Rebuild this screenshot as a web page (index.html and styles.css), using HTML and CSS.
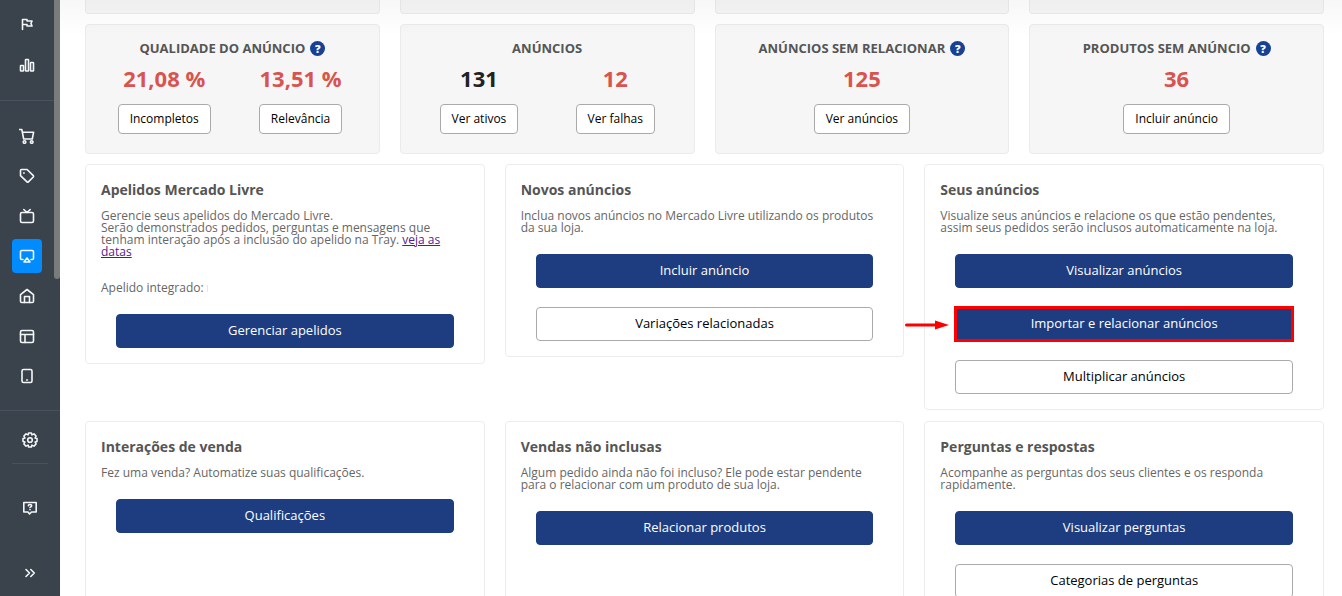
FILE: index.html
```
<!DOCTYPE html>
<html lang="pt-br">
	<head>
		<meta charset="utf-8">
		<meta name="viewport" content="width=device-width, initial-scale=1">
		<title>Mercado Livre</title>
		<link rel="stylesheet" href="styles.css">
	</head>

	<body>

		<aside class="sidebar">
			<nav class="menu">
				<div class="menu-group menu-top">
					<a class="menu-item" href="#" aria-label="Início"><svg viewBox="0 0 16 16"><path d="M3.500 13.500V3.500h4.500v1.500H13L12 7.500l1 2.500H8V8.500H3.500"/></svg></a>
					<a class="menu-item" href="#" aria-label="Relatórios"><svg viewBox="0 0 16 16"><rect x="1.500" y="8.500" width="3" height="5.500" rx=".5"/><rect x="6.500" y="2.500" width="3" height="11.500" rx=".5"/><rect x="11.500" y="5.500" width="3" height="8.500" rx=".5"/></svg></a>
				</div>
				<div class="menu-group menu-main">
					<a class="menu-item" href="#" aria-label="Pedidos"><svg viewBox="0 0 16 16"><path d="M.5 1.500h2.300l1.900 9.500h8.600l1.300-6.800H3.400"/><circle cx="5.500" cy="14" r="1.300"/><circle cx="12.700" cy="14" r="1.300"/></svg></a>
					<a class="menu-item" href="#" aria-label="Produtos"><svg viewBox="0 0 16 16"><path d="M1.500 2.500q0-1 1-1h5.600l6.200 6.100q.6.7 0 1.400l-4.900 4.900q-.7.6-1.400 0L1.500 7.700z"/><path d="M4.600 5h.6"/></svg></a>
					<a class="menu-item" href="#" aria-label="Marketing"><svg viewBox="0 0 16 16"><rect x="1.500" y="4.500" width="13" height="10" rx="1.500"/><path d="M4.800 1.500l3.200 3 3.200-3"/></svg></a>
					<a class="menu-item active" href="#" aria-label="Canais de venda"><svg viewBox="0 0 16 16"><path d="M4 11.500H2.800q-1.300 0-1.300-1.300V3.800q0-1.300 1.300-1.300h10.400q1.300 0 1.300 1.300v6.400q0 1.300-1.300 1.300H12"/><path d="M8 10l3 4H5z"/></svg></a>
					<a class="menu-item" href="#" aria-label="Minha loja"><svg viewBox="0 0 16 16"><path d="M1.500 6.600L8 1.500l6.500 5.100v6.600q0 1.300-1.300 1.300H2.800q-1.300 0-1.300-1.300z"/><path d="M5.500 14.500V8.500h5v6"/></svg></a>
					<a class="menu-item" href="#" aria-label="Layout"><svg viewBox="0 0 16 16"><rect x="1.500" y="2.500" width="13" height="12" rx="1.500"/><path d="M1.500 6.500h13M6 6.500v8"/></svg></a>
					<a class="menu-item" href="#" aria-label="Aplicativos"><svg viewBox="0 0 16 16"><rect x="3" y="1.500" width="10" height="13" rx="1.500"/><path d="M7.600 12h.8"/></svg></a>
				</div>
				<span class="menu-scroll"></span>
			</nav>
			<div class="menu-footer">
				<a class="menu-item" href="#" aria-label="Configurações"><svg viewBox="0 0 16 16"><path d="M6.600 1h2.800l.5 1.900 2.100-1 2.100 2.100-1 2.100 1.900.5v2.800l-1.900.5 1 2.100-2.100 2.100-2.100-1-.5 1.900H6.600l-.5-1.900-2.100 1-2.100-2.100 1-2.100L1 9.400V6.600l1.900-.5-1-2.100L4 1.900l2.100 1z"/><circle cx="8" cy="8" r="2.300"/></svg></a>
				<span class="menu-line"></span>
				<a class="menu-item menu-help" href="#" aria-label="Ajuda"><svg viewBox="0 0 16 16"><path d="M1.800 2.500h12.400v9.500H9.500L7.500 14 6 12H1.800z"/><path d="M6.300 5.800q0-1.300 1.700-1.300t1.700 1.300q0 .8-1.700 1.600M8 9.500v.3"/></svg></a>
				<a class="menu-item menu-expand" href="#" aria-label="Expandir menu"><svg viewBox="0 0 16 16"><path d="M4 4.500L7.500 8 4 11.500M8.800 4.500L12.300 8l-3.500 3.500"/></svg></a>
			</div>
		</aside>

		<main class="content">
			<div class="summary">
				<div class="summary-box summary-end"></div>
				<div class="summary-box summary-end"></div>
				<div class="summary-box summary-end"></div>
				<div class="summary-box summary-end"></div>

				<div class="summary-box">
					<h2 class="summary-title">QUALIDADE DO ANÚNCIO <span class="help">?</span></h2>
					<div class="summary-values">
						<div class="summary-value"><strong class="number red">21,08 %</strong><button class="btn-small">Incompletos</button></div>
						<div class="summary-value"><strong class="number red">13,51 %</strong><button class="btn-small">Relevância</button></div>
					</div>
				</div>
				<div class="summary-box">
					<h2 class="summary-title">ANÚNCIOS</h2>
					<div class="summary-values">
						<div class="summary-value"><strong class="number">131</strong><button class="btn-small">Ver ativos</button></div>
						<div class="summary-value"><strong class="number red">12</strong><button class="btn-small">Ver falhas</button></div>
					</div>
				</div>
				<div class="summary-box">
					<h2 class="summary-title">ANÚNCIOS SEM RELACIONAR <span class="help">?</span></h2>
					<div class="summary-values">
						<div class="summary-value"><strong class="number red">125</strong><button class="btn-small">Ver anúncios</button></div>
					</div>
				</div>
				<div class="summary-box">
					<h2 class="summary-title">PRODUTOS SEM ANÚNCIO <span class="help">?</span></h2>
					<div class="summary-values">
						<div class="summary-value"><strong class="number red">36</strong><button class="btn-small">Incluir anúncio</button></div>
					</div>
				</div>
			</div>

			<div class="panels">
				<section class="panel">
					<h3 class="panel-title">Apelidos Mercado Livre</h3>
					<p class="panel-text">Gerencie seus apelidos do Mercado Livre.<br>Serão demonstrados pedidos, perguntas e mensagens que tenham interação após a inclusão do apelido na Tray. <a class="panel-link" href="#">veja as datas</a></p>
					<p class="panel-text nickname">Apelido integrado: <span class="nickname-mark"></span></p>
					<div class="panel-buttons">
						<button class="btn btn-blue">Gerenciar apelidos</button>
					</div>
				</section>

				<section class="panel">
					<h3 class="panel-title">Novos anúncios</h3>
					<p class="panel-text">Inclua novos anúncios no Mercado Livre utilizando os produtos da sua loja.</p>
					<div class="panel-buttons">
						<button class="btn btn-blue">Incluir anúncio</button>
						<button class="btn">Variações relacionadas</button>
					</div>
				</section>

				<section class="panel">
					<h3 class="panel-title">Seus anúncios</h3>
					<p class="panel-text">Visualize seus anúncios e relacione os que estão pendentes, assim seus pedidos serão inclusos automaticamente na loja.</p>
					<div class="panel-buttons">
						<button class="btn btn-blue">Visualizar anúncios</button>
						<button class="btn btn-blue btn-marked">Importar e relacionar anúncios
							<svg class="arrow" viewBox="0 0 44 10"><path d="M1.500 5H32" stroke="#f00" stroke-width="3" stroke-linecap="round"/><path d="M30 .5L44 5 30 9.500z" fill="#f00"/></svg>
						</button>
						<button class="btn">Multiplicar anúncios</button>
					</div>
				</section>
			</div>

			<div class="panels panels-full">
				<section class="panel">
					<h3 class="panel-title">Interações de venda</h3>
					<p class="panel-text">Fez uma venda? Automatize suas qualificações.</p>
					<div class="panel-buttons">
						<button class="btn btn-blue">Qualificações</button>
					</div>
				</section>

				<section class="panel">
					<h3 class="panel-title">Vendas não inclusas</h3>
					<p class="panel-text">Algum pedido ainda não foi incluso? Ele pode estar pendente para o relacionar com um produto de sua loja.</p>
					<div class="panel-buttons">
						<button class="btn btn-blue">Relacionar produtos</button>
					</div>
				</section>

				<section class="panel">
					<h3 class="panel-title">Perguntas e respostas</h3>
					<p class="panel-text">Acompanhe as perguntas dos seus clientes e os responda rapidamente.</p>
					<div class="panel-buttons">
						<button class="btn btn-blue">Visualizar perguntas</button>
						<button class="btn">Categorias de perguntas</button>
					</div>
				</section>
			</div>
		</main>

	</body>
</html>
```
FILE: styles.css
```
* {
	box-sizing: border-box;
}
body {
	margin: 0;
	height: 100vh;
	overflow: hidden;
	display: flex;
	background: #fff;
	color: #555;
	font-family: "Open Sans", sans-serif;
	font-size: 12px;
}

/* menu lateral */
.sidebar {
	width: 60px;
	flex: none;
	display: flex;
	flex-direction: column;
	background: #3a424b;
}
.menu {
	position: relative;
	border-bottom: 1px solid #46525d;
}
.menu-group {
	width: 54px;
	display: flex;
	flex-direction: column;
	align-items: center;
}
.menu-top {
	gap: 7px;
	padding: 7px 0 18px;
	border-bottom: 1px solid #46525d;
}
.menu-main {
	gap: 6px;
	padding: 18px 0 17px;
}
.menu-item {
	width: 30px;
	height: 34px;
	flex: none;
	display: flex;
	align-items: center;
	justify-content: center;
	border-radius: 4px;
	color: #f4f7f9;
}
.menu-item svg {
	width: 16px;
	height: 16px;
	fill: none;
	stroke: currentColor;
	stroke-width: 1.6;
	stroke-linecap: round;
	stroke-linejoin: round;
}
.menu-item.active {
	background: #008cff;
}
.menu-scroll {
	position: absolute;
	top: 0;
	right: 0;
	width: 6px;
	height: 279px;
	border-radius: 0 0 3px 3px;
	background: #7a7b7d;
}
.menu-footer {
	flex: 1;
	display: flex;
	flex-direction: column;
	align-items: center;
	padding: 12px 0 6px;
}
.menu-line {
	width: 36px;
	margin-top: 6px;
	border-top: 1px solid #46525d;
}
.menu-help {
	margin-top: 27px;
}
.menu-expand {
	margin-top: auto;
}

/* conteudo */
.content {
	position: relative;
	flex: 1;
	min-width: 0;
	overflow: hidden;
	padding: 0 18px 0 25px;
}
.content::before {
	content: "";
	position: absolute;
	top: 0;
	left: 0;
	right: 0;
	height: 36px;
	background: linear-gradient(rgba(0,0,0,.03), rgba(0,0,0,0));
	pointer-events: none;
}

.summary {
	display: grid;
	grid-template-columns: repeat(4, 1fr);
	gap: 10px 20px;
}
.summary-box {
	padding: 14px 10px 19px;
	border: 1px solid #ebebeb;
	border-radius: 4px;
	background: #f6f6f6;
	text-align: center;
}
.summary-end {
	height: 14px;
	padding: 0;
	border-top: none;
	border-radius: 0 0 4px 4px;
}
.summary-title {
	margin: 0;
	font-size: 13px;
	line-height: 18px;
	font-weight: 700;
	display: flex;
	justify-content: center;
	align-items: center;
	gap: 5px;
}
.help {
	width: 15px;
	height: 15px;
	border-radius: 50%;
	background: #164194;
	color: #fff;
	font-size: 11px;
	line-height: 15px;
	font-weight: 800;
}
.summary-values {
	display: flex;
}
.summary-value {
	flex: 1;
	display: flex;
	flex-direction: column;
	align-items: center;
	gap: 11px;
	padding-top: 6px;
}
.number {
	color: #222;
	font-size: 22px;
	line-height: 30px;
	font-weight: 700;
}
.number.red {
	color: #d9534f;
}
.btn-small {
	height: 30px;
	padding: 0 11px 2px;
	border: 1px solid #aaa;
	border-radius: 4px;
	background: #fff;
	color: #000;
	font-family: inherit;
	font-size: 12px;
	cursor: pointer;
}

.panels {
	display: grid;
	grid-template-columns: repeat(3, 1fr);
	gap: 20px;
	align-items: start;
	margin-top: 10px;
}
.panels-full {
	align-items: stretch;
	margin-top: 11px;
}
.panel {
	padding: 15px;
	border: 1px solid #ececec;
	border-radius: 4px;
}
.panel-title {
	margin: 0 0 10px;
	font-size: 14px;
	line-height: 20px;
	font-weight: 700;
}
.panel-text {
	margin: 0;
	color: #666;
	font-size: 12px;
	line-height: 12px;
}
.panel-link {
	color: #551a8b;
}
.nickname {
	margin-top: 24px;
}
.nickname-mark {
	display: inline-block;
	height: 7px;
	border-left: 1px solid #f0e4d8;
}
.panel-buttons {
	display: flex;
	flex-direction: column;
	gap: 19px;
	margin: 20px 15px 0;
}
.btn {
	position: relative;
	height: 34px;
	padding: 0 6px 2px;
	border: 1px solid #aaa;
	border-radius: 4px;
	background: #fff;
	color: #000;
	font-family: inherit;
	font-size: 13px;
	cursor: pointer;
}
.btn-blue {
	border-color: #1d3d80;
	background: #1d3d80;
	color: #fff;
}
.btn-marked {
	border-radius: 0;
	outline: 3px solid #f00;
	outline-offset: -2px;
}
.arrow {
	position: absolute;
	top: 12px;
	right: 100%;
	width: 44px;
	height: 10px;
	margin-right: 7px;
	fill: none;
}
```
